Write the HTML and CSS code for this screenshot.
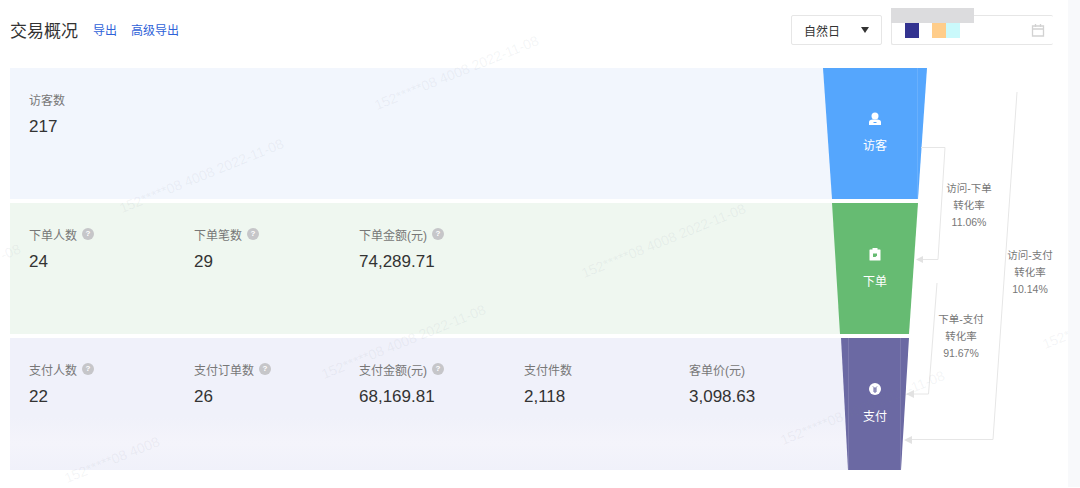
FILE: index.html
```html
<!DOCTYPE html>
<html lang="zh-CN">
<head>
    <meta charset="UTF-8">
    <title>交易概况</title>
    <link rel="stylesheet" href="styles.css">
</head>
<body>
    <div class="page">
        <div class="header">
            <div class="title-group">
                <h1>交易概况</h1>
                <a class="link" href="#">导出</a>
                <a class="link" href="#">高级导出</a>
            </div>
            <div class="filters">
                <div class="select">自然日<span class="caret"></span></div>
                <div class="date-box">
                    <span class="date-mask"></span>
                    <span class="swatch navy"></span>
                    <span class="swatch peach"></span>
                    <span class="swatch aqua"></span>
                    <svg class="calendar" width="14" height="14" viewBox="0 0 14 14">
                        <path d="M1.5 3h11v10h-11zM1.5 6h11M4.500 1v3M9.500 1v3" fill="none" stroke="#d2d2d2" stroke-width="1.3"/>
                    </svg>
                </div>
            </div>
        </div>

        <div class="rows">
            <section class="row row-visit">
                <div class="metric">
                    <div class="label">访客数</div>
                    <div class="value">217</div>
                </div>
            </section>
            <section class="row row-order">
                <div class="metric">
                    <div class="label">下单人数<i class="help">?</i></div>
                    <div class="value">24</div>
                </div>
                <div class="metric">
                    <div class="label">下单笔数<i class="help">?</i></div>
                    <div class="value">29</div>
                </div>
                <div class="metric">
                    <div class="label">下单金额(元)<i class="help">?</i></div>
                    <div class="value">74,289.71</div>
                </div>
            </section>
            <section class="row row-pay">
                <div class="metric">
                    <div class="label">支付人数<i class="help">?</i></div>
                    <div class="value">22</div>
                </div>
                <div class="metric">
                    <div class="label">支付订单数<i class="help">?</i></div>
                    <div class="value">26</div>
                </div>
                <div class="metric">
                    <div class="label">支付金额(元)<i class="help">?</i></div>
                    <div class="value">68,169.81</div>
                </div>
                <div class="metric">
                    <div class="label">支付件数</div>
                    <div class="value">2,118</div>
                </div>
                <div class="metric">
                    <div class="label">客单价(元)</div>
                    <div class="value">3,098.63</div>
                </div>
            </section>
        </div>

        <!-- 漏斗和连接线 -->
        <svg class="funnel" width="1080" height="488" viewBox="0 0 1080 488">
            <polygon points="823,68 927,68 918,199 832,199" fill="#55a6fd"/>
            <polygon points="832,203 918,203 909,334 840,334" fill="#66bb72"/>
            <polygon points="841,338 909,338 901,470 848,470" fill="#6b69a3"/>

            <g fill="none" stroke="#fff" stroke-opacity="0.12" stroke-width="1">
                <path d="M917.500 68V199"/>
                <path d="M848.500 338V470M900.500 338V470"/>
            </g>

            <g fill="none" stroke="#e6e6e6" stroke-width="1">
                <path d="M921 147.500H945L938 259.500H922"/>
                <path d="M937 283L928.500 394H914"/>
                <path d="M1017 92L993 439.500H911"/>
            </g>
            <g fill="#e2e2e2">
                <polygon points="916,259.500 923,256 923,263"/>
                <polygon points="906,394 914,390 914,398"/>
                <polygon points="904,440 912,436 912,444"/>
            </g>

            <!-- 访客 -->
            <circle cx="875" cy="116" r="3.500" fill="#fff"/>
            <path d="M869 125v-3c0-2 2-2.500 6-2.500s6 .5 6 2.500v3z" fill="#fff"/>
            <path d="M873.500 122.500h3" stroke="#55a6fd" stroke-width="1"/>
            <!-- 下单 -->
            <path d="M870 249.500h2.500v-1.500h5v1.500h2.500a.5 .5 0 0 1 .5 .5v10a.5 .5 0 0 1 -.5 .5h-10a.5 .5 0 0 1 -.5 -.5v-10a.5 .5 0 0 1 .5 -.5z" fill="#fff"/>
            <path d="M873 253.500h4v2l-1.500 1.500h-2.500z" fill="#66bb72"/>
            <!-- 支付 -->
            <circle cx="875" cy="389" r="6" fill="#fff"/>
            <path d="M873 386.500l2 2 2-2M873 389h4M873 391h4M875 388.500v4.500" fill="none" stroke="#6b69a3" stroke-width="1"/>
        </svg>

        <span class="stage" style="left: 845px; top: 138px;">访客</span>
        <span class="stage" style="left: 845px; top: 274px;">下单</span>
        <span class="stage" style="left: 845px; top: 409px;">支付</span>

        <div class="rate" style="left: 939px; top: 180px;">访问-下单<br>转化率<br>11.06%</div>
        <div class="rate" style="left: 931px; top: 311px;">下单-支付<br>转化率<br>91.67%</div>
        <div class="rate" style="left: 1000px; top: 247px;">访问-支付<br>转化率<br>10.14%</div>

        <span class="mark" style="left: 378px; top: 97px;">152*****08 4008 2022-11-08</span>
        <span class="mark" style="left: 123px; top: 200px;">152*****08 4008 2022-11-08</span>
        <span class="mark" style="left: 585px; top: 265px;">152*****08 4008 2022-11-08</span>
        <span class="mark" style="left: 325px; top: 366px;">152*****08 4008 2022-11-08</span>
        <span class="mark" style="left: 68px; top: 470px;">152*****08 4008</span>
        <span class="mark" style="left: 784px; top: 432px;">152*****08 4008 2022-11-08</span>
        <span class="mark" style="left: 1046px; top: 336px;">152**</span>
        <span class="mark" style="left: 4px; top: 247px;">-08</span>
        <div class="side-strip"></div>
    </div>
</body>
</html>
```

FILE: styles.css
```css
* {
    box-sizing: border-box;
}

html, body {
    margin: 0;
    padding: 0;
    background: #fff;
}

.page {
    position: relative;
    width: 1080px;
    height: 488px;
    padding: 0 12px 0 10px;
    overflow: hidden;
    font-family: "Liberation Sans", "Noto Sans CJK SC", sans-serif;
}

.header {
    display: flex;
    justify-content: space-between;
    align-items: center;
    height: 68px;
    padding-bottom: 8px;
    padding-right: 15px;
}

.title-group {
    display: flex;
    align-items: center;
    gap: 14px;
    margin-bottom: 2px;
}

h1 {
    margin: 0;
    font-size: 17px;
    font-weight: normal;
    color: #333;
}

.link {
    font-size: 12px;
    color: #2f62d8;
    text-decoration: none;
}

h1 + .link {
    margin-left: 1px;
}

.filters {
    display: flex;
    gap: 9px;
}

.select {
    display: flex;
    justify-content: space-between;
    align-items: center;
    width: 91px;
    height: 30px;
    padding: 0 12px;
    border: 1px solid #e6e6e6;
    border-radius: 2px;
    font-size: 12px;
    color: #333;
}

.caret {
    border-top: 6px solid #333;
    border-left: 4px solid transparent;
    border-right: 4px solid transparent;
}

.date-box {
    position: relative;
    display: flex;
    align-items: center;
    width: 162px;
    height: 30px;
    padding-left: 13px;
    border: 1px solid #e6e6e6;
    border-right: none;
    border-radius: 2px;
}

.date-mask {
    position: absolute;
    left: -1px;
    top: -8px;
    width: 83px;
    height: 15px;
    background: #dcdcde;
}

.swatch {
    width: 14px;
    height: 15px;
}

.navy {
    background: #333390;
    margin-right: 13px;
}

.peach {
    background: #ffcd8a;
}

.aqua {
    background: #caf9fb;
}

.calendar {
    margin-left: auto;
    margin-right: 8px;
}

.rows {
    display: flex;
    flex-direction: column;
    gap: 4px;
    width: 880px;
}

.row {
    display: flex;
    height: 131px;
    padding: 22px 19px;
}

.row-visit {
    background: #f2f6fd;
}

.row-order {
    background: #eff7f0;
}

.row-pay {
    height: 132px;
    background: linear-gradient(#f0f1fa 60%, #f4f4fb 80%, #f0f1fa);
}

.metric {
    width: 165px;
}

.label {
    display: flex;
    align-items: center;
    height: 18px;
    font-size: 12px;
    color: #777;
}

.help {
    width: 12px;
    height: 12px;
    margin-left: 5px;
    border-radius: 50%;
    background: #c6c6c9;
    color: #fff;
    font-size: 8px;
    font-style: normal;
    font-weight: bold;
    line-height: 12px;
    text-align: center;
}

.value {
    margin-top: 9px;
    font-size: 17px;
    color: #333;
}

.funnel {
    position: absolute;
    left: 0;
    top: 0;
}

.stage {
    position: absolute;
    width: 60px;
    font-size: 12px;
    line-height: 16px;
    color: #fff;
    text-align: center;
}

.rate {
    position: absolute;
    width: 60px;
    font-size: 10.5px;
    line-height: 17px;
    color: #777;
    text-align: center;
}

.mark {
    position: absolute;
    font-size: 14px;
    color: rgba(120, 130, 150, 0.09);
    white-space: nowrap;
    transform: rotate(-22deg);
    transform-origin: left bottom;
}

.side-strip {
    position: absolute;
    right: 0;
    top: 0;
    width: 12px;
    height: 487px;
    background: #f8f9fb;
}
```
